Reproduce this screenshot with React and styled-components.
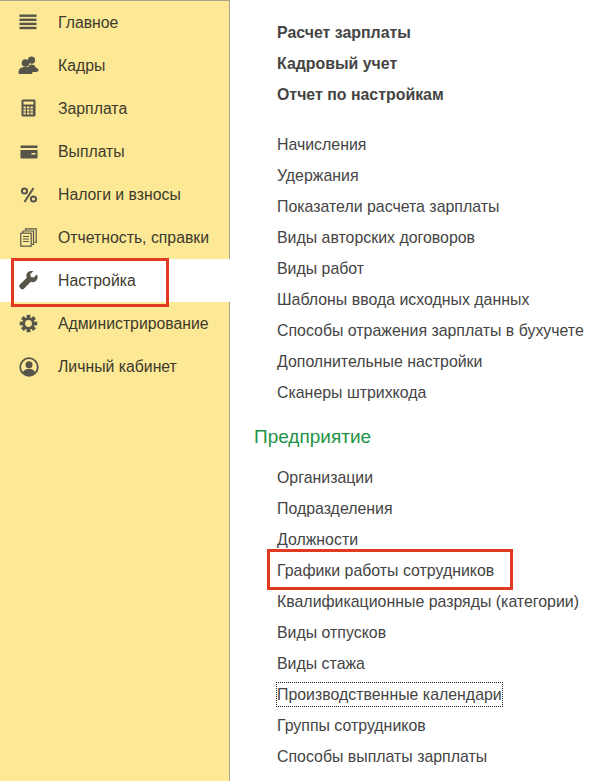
import React from "react";
import styled, { createGlobalStyle } from "styled-components";

const GlobalStyle = createGlobalStyle`
  html, body {
    margin: 0;
    padding: 0;
    background: #fff;
  }
  body {
    font-family: "Liberation Sans", Arial, sans-serif;
  }
`;

const Page = styled.div`
  display: flex;
  width: 600px;
  height: 781px;
  overflow: hidden;
  background: #fff;
`;

const Sidebar = styled.nav`
  box-sizing: border-box;
  width: 230px;
  flex: none;
  background: #fde896;
  border-top: 1px solid #a9a488;
  border-right: 1px solid #a9a488;
`;

const MenuRow = styled.div`
  position: relative;
  display: flex;
  align-items: center;
  height: 43px;
  padding-left: 18px;
  font-size: 15.8px;
  color: #3c3a2c;
  background: ${(p) => (p.$active ? "#fff" : "transparent")};
  margin-right: ${(p) => (p.$active ? "-1px" : "0")};
`;

const IconSlot = styled.span`
  display: flex;
  justify-content: center;
  align-items: center;
  width: 21px;
  height: 21px;
  margin-right: 19px;
  color: #57554a;
`;

const Highlight = styled.span`
  position: absolute;
  border: 3px solid #e23a22;
  box-sizing: border-box;
  pointer-events: none;
`;

const MenuHighlight = styled(Highlight)`
  left: 11px;
  top: -1px;
  width: 158px;
  height: 49px;
`;

const Content = styled.main`
  flex: 1;
  padding: 17px 0 0 24px;
  color: #444;
  font-size: 15.9px;
`;

const Group = styled.div`
  display: flex;
  flex-direction: column;
  align-items: flex-start;
  margin-bottom: ${(p) => p.$gap || 0}px;
`;

const LinkRow = styled.div`
  position: relative;
  height: 31px;
  line-height: 31px;
  padding-left: 23px;
  white-space: nowrap;
  font-weight: ${(p) => (p.$bold ? 700 : 400)};
`;

const LinkHighlight = styled(Highlight)`
  left: 13px;
  top: -6px;
  width: 246px;
  height: 41px;
`;

const FocusedText = styled.span`
  display: inline-block;
  line-height: 23px;
  outline: 1px dotted #222;
`;

const SectionTitle = styled.h2`
  margin: 0 0 12px;
  font-size: 19px;
  line-height: 26px;
  font-weight: 400;
  color: #1f9347;
`;

const ListIcon = () => (
  <svg width="19" height="19" viewBox="0 0 19 19" fill="currentColor">
    <rect x="0.5" y="1.5" width="17" height="2.4" />
    <rect x="0.5" y="5.6" width="17" height="2.4" />
    <rect x="0.5" y="9.7" width="17" height="2.4" />
    <rect x="0.5" y="13.8" width="17" height="2.4" />
  </svg>
);

const PeopleIcon = () => (
  <svg width="21" height="19" viewBox="0 0 21 19" fill="currentColor">
    <circle cx="13.5" cy="4.2" r="3.6" />
    <path d="M10 12c.5-2.5 2-3.5 3.5-3.5s3.6.6 4.4 3.2c1.3.1 2.6 1 2.6 2.6 0 1-1 1.7-2.6 1.7H14c0-1.6-1.4-3-4-4z" />
    <circle cx="7.5" cy="7" r="3.8" />
    <path d="M0.5 16.5c0-3.6 2.6-5.4 7-5.4s7 1.8 7 5.4c0 1-.7 1.5-1.6 1.5H2c-.9 0-1.5-.5-1.5-1.5z" />
  </svg>
);

const CalcIcon = () => (
  <svg width="16" height="19" viewBox="0 0 16 19">
    <rect x="0.5" y="0.5" width="14" height="17" rx="1.5" fill="currentColor" />
    <rect x="2.5" y="2.5" width="10" height="3" fill="#fde896" />
    {[7.5, 10.5, 13.5].map((y) =>
      [2.5, 6, 9.5].map((x) => (
        <rect key={`${x}-${y}`} x={x} y={y} width="2.4" height="2" fill="#fde896" />
      ))
    )}
  </svg>
);

const WalletIcon = () => (
  <svg width="18" height="14" viewBox="0 0 18 14" fill="currentColor">
    <path d="M0.5 1.5c0-.6.4-1 1-1h15c.6 0 1 .4 1 1V3H.5z" />
    <path d="M.5 5h17v7.5c0 .6-.4 1-1 1h-15c-.6 0-1-.4-1-1zM11.5 8v1.5h4V8z" fillRule="evenodd" />
  </svg>
);

const PercentIcon = () => (
  <svg width="18" height="16" viewBox="0 0 18 16" fill="none" stroke="currentColor">
    <circle cx="4.5" cy="4" r="2.6" strokeWidth="2" />
    <circle cx="13.5" cy="12" r="2.6" strokeWidth="2" />
    <path d="M13.5 1 4.5 15" strokeWidth="2" />
  </svg>
);

const ReportIcon = () => (
  <svg width="17" height="19" viewBox="0 0 17 19" fill="none" stroke="currentColor" strokeWidth="1.2">
    <path d="M5.5 2.5V.8h10.7v13.5h-1.7" />
    <path d="M3 5V3h10.5v13.500h-1.500" />
    <rect x="0.8" y="5.2" width="10.4" height="13" />
    <path d="M3 8.5h6M3 11h6M3 13.5h6" />
  </svg>
);

const WrenchIcon = () => (
  <svg width="19" height="19" viewBox="0 0 19 19" fill="currentColor">
    <path d="M18.2 3.6 15 6.7l-2.8-.7-.8-2.8L14.6.2c-2-.7-4.2-.2-5.6 1.2-1.5 1.5-1.9 3.6-1.1 5.5L.9 13.900c-.9.9-.9 2.3 0 3.2l.9.9c.9.9 2.3.9 3.2 0l7-7c1.9.8 4 .4 5.5-1.1 1.4-1.4 1.9-3.5 1.2-5.5z" transform="scale(.98)" />
  </svg>
);

const GearIcon = () => (
  <svg width="19" height="19" viewBox="0 0 19 19">
    <g fill="currentColor">
      {[0, 45, 90, 135, 180, 225, 270, 315].map((a) => (
        <rect key={a} x="7.6" y="0.8" width="3.8" height="4.5" transform={`rotate(${a} 9.5 9.5)`} />
      ))}
      <circle cx="9.5" cy="9.5" r="6" />
    </g>
    <circle cx="9.5" cy="9.5" r="3.4" fill="#fde896" />
  </svg>
);

const ProfileIcon = () => (
  <svg width="20" height="20" viewBox="0 0 20 20">
    <circle cx="10" cy="10" r="8.8" fill="none" stroke="currentColor" strokeWidth="1.8" />
    <circle cx="10" cy="7.8" r="3.5" fill="currentColor" />
    <path d="M3.8 15.5c1-2.6 3.4-3.7 6.2-3.7s5.2 1.100 6.2 3.700c-1.500 1.700-3.700 2.700-6.200 2.700s-4.700-1-6.200-2.700z" fill="currentColor" />
  </svg>
);

const menu = [
  { label: "Главное", icon: <ListIcon /> },
  { label: "Кадры", icon: <PeopleIcon /> },
  { label: "Зарплата", icon: <CalcIcon /> },
  { label: "Выплаты", icon: <WalletIcon /> },
  { label: "Налоги и взносы", icon: <PercentIcon /> },
  { label: "Отчетность, справки", icon: <ReportIcon /> },
  { label: "Настройка", icon: <WrenchIcon />, active: true },
  { label: "Администрирование", icon: <GearIcon /> },
  { label: "Личный кабинет", icon: <ProfileIcon /> },
];

const topLinks = ["Расчет зарплаты", "Кадровый учет", "Отчет по настройкам"];

const settingsLinks = [
  "Начисления",
  "Удержания",
  "Показатели расчета зарплаты",
  "Виды авторских договоров",
  "Виды работ",
  "Шаблоны ввода исходных данных",
  "Способы отражения зарплаты в бухучете",
  "Дополнительные настройки",
  "Сканеры штрихкода",
];

const companyLinks = [
  "Организации",
  "Подразделения",
  "Должности",
  "Графики работы сотрудников",
  "Квалификационные разряды (категории)",
  "Виды отпусков",
  "Виды стажа",
  "Производственные календари",
  "Группы сотрудников",
  "Способы выплаты зарплаты",
];

const App = () => (
  <>
    <GlobalStyle />
    <Page>
      <Sidebar>
        {menu.map((item) => (
          <MenuRow key={item.label} $active={item.active}>
            <IconSlot>{item.icon}</IconSlot>
            {item.label}
            {item.active && <MenuHighlight />}
          </MenuRow>
        ))}
      </Sidebar>
      <Content>
        <Group $gap={19}>
          {topLinks.map((text) => (
            <LinkRow key={text} $bold>
              {text}
            </LinkRow>
          ))}
        </Group>
        <Group $gap={16}>
          {settingsLinks.map((text) => (
            <LinkRow key={text}>{text}</LinkRow>
          ))}
        </Group>
        <SectionTitle>Предприятие</SectionTitle>
        <Group>
          {companyLinks.map((text) => (
            <LinkRow key={text}>
              {text === "Производственные календари" ? <FocusedText>{text}</FocusedText> : text}
              {text === "Графики работы сотрудников" && <LinkHighlight />}
            </LinkRow>
          ))}
        </Group>
      </Content>
    </Page>
  </>
);

export default App;
